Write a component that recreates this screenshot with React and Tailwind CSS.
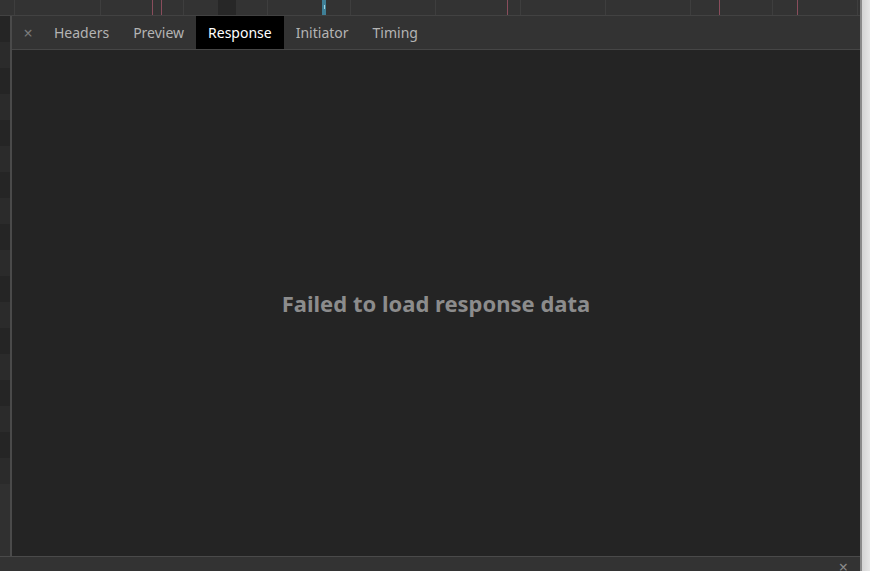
import React from 'react';

const tabs = ['Headers', 'Preview', 'Response', 'Initiator', 'Timing'];

// waterfall strip above the panel
function Waterfall() {
  const grid = [14, 100, 183, 267, 350, 435, 520, 605, 690, 772, 857];
  const red = [152, 161, 507, 719, 797];
  return (
    <svg width="860" height="16" className="block">
      <rect x="0" y="0" width="860" height="16" fill="#333333" />
      <rect x="218" y="0" width="18" height="15" fill="#272727" />
      {grid.map((x) => (
        <rect key={x} x={x} y="0" width="1" height="15" fill="#3e3e3e" />
      ))}
      {red.map((x) => (
        <rect key={x} x={x} y="0" width="1" height="15" fill="#8a4d5c" />
      ))}
      <rect x="322" y="0" width="4" height="15" fill="#3f7f96" />
      <rect x="324" y="5" width="1" height="4" fill="#9fd3e3" />
      <rect x="0" y="15" width="860" height="1" fill="#424242" />
    </svg>
  );
}

function LeftStrip() {
  const rows = Array.from({ length: 18 });
  return (
    <div className="w-[10px] flex flex-col bg-[#262626]">
      {rows.map((_, i) => (
        <div key={i} className={`h-[26px] ${i % 2 ? 'bg-[#2b2b2b]' : 'bg-[#252525]'}`} />
      ))}
      <div className="flex-1 bg-[#303030]" />
    </div>
  );
}

export default function App() {
  return (
    <div className="w-[870px] h-[571px] flex overflow-hidden bg-[#242424]" style={{ fontFamily: '"Noto Sans", "Open Sans", sans-serif' }}>
      <div className="w-[860px] flex flex-col">
        <Waterfall />
        <div className="flex flex-1 min-h-0">
          <LeftStrip />
          <div className="w-[2px] bg-[#4a4a4a]" />
          <div className="flex-1 flex flex-col">
            <div className="h-[34px] flex items-stretch bg-[#333333] border-b border-[#464646]">
              <div className="w-[30px] flex items-center justify-center text-[#7a7a7a] text-[16px] pl-[2px]">×</div>
              <div className="flex items-stretch">
                {tabs.map((t) => (
                  <div
                    key={t}
                    className={`px-[12px] flex items-center text-[14px] ${
                      t === 'Response' ? 'bg-black text-white' : 'text-[#b4b4b4]'
                    }`}
                  >
                    {t}
                  </div>
                ))}
              </div>
            </div>
            <div className="flex-1 flex items-center justify-center">
              <div className="text-[22px] font-bold text-[#8c8c8c] mt-[1px]">Failed to load response data</div>
            </div>
          </div>
        </div>
        <div className="h-[15px] bg-[#333333] border-t border-[#4a4a4a] flex justify-end pr-[12px]">
          <span className="text-[#8a8a8a] text-[16px] leading-[20px]">×</span>
        </div>
      </div>
      <div className="w-[10px] flex">
        <div className="w-[2px] bg-[#8a8a8a]" />
        <div className="flex-1 bg-gradient-to-r from-[#d4d4d4] to-[#e6e6e6]" />
      </div>
    </div>
  );
}
